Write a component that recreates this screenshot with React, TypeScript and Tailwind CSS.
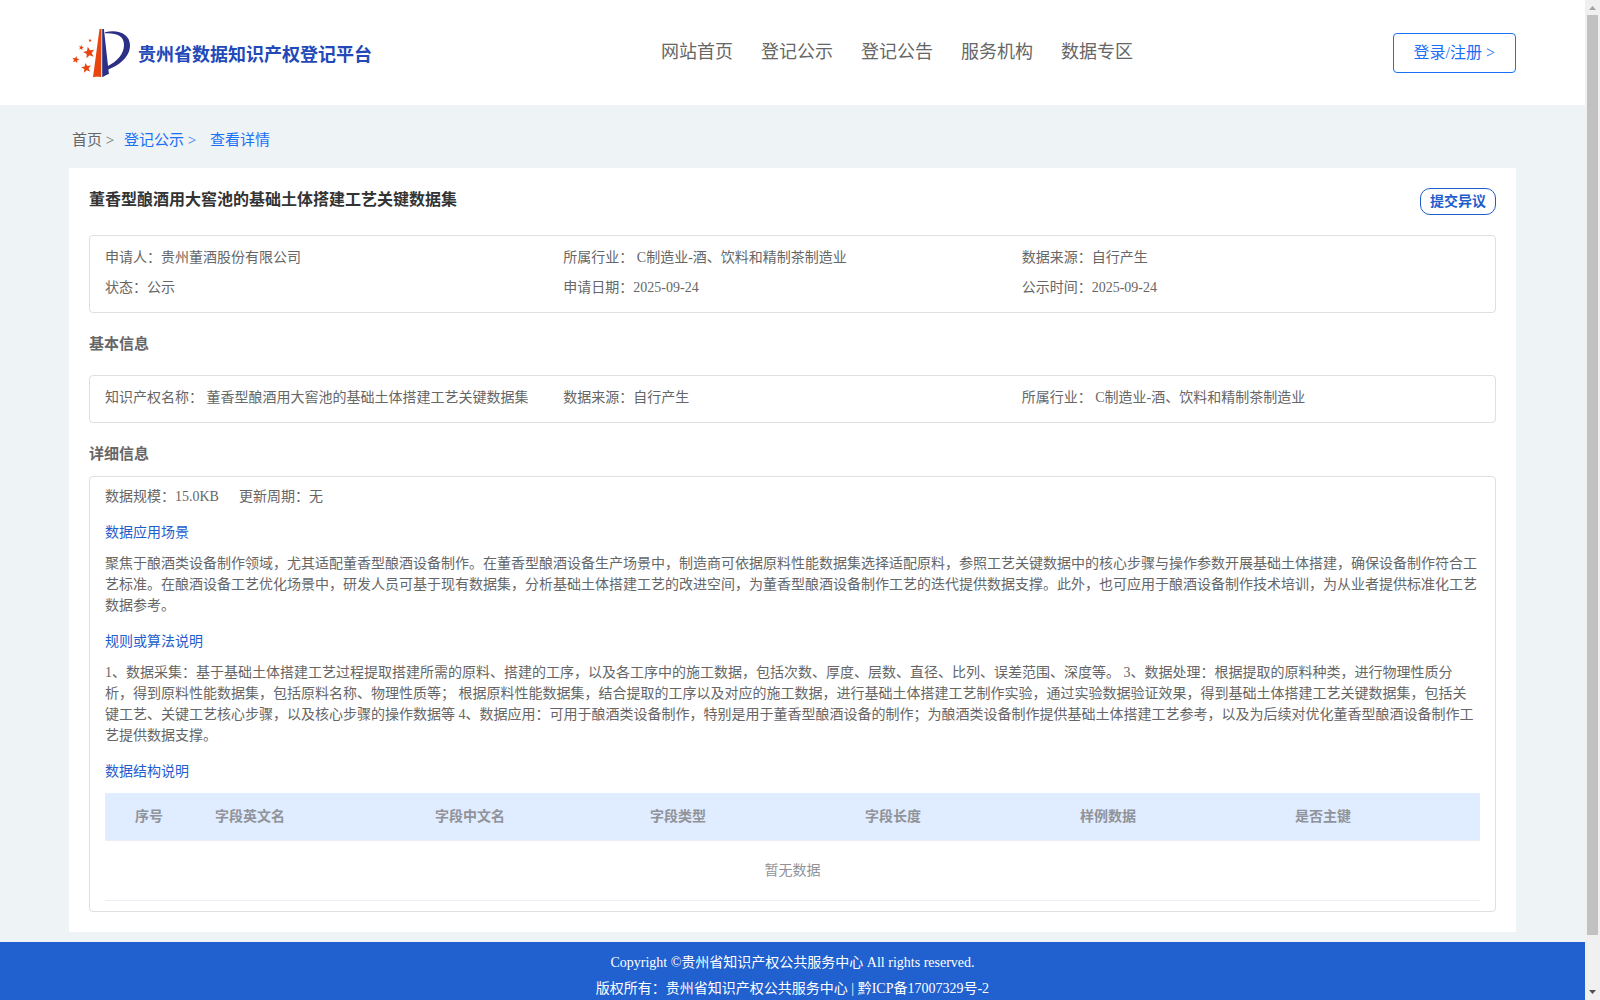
import React from "react";

const navItems = ["网站首页", "登记公示", "登记公告", "服务机构", "数据专区"];
const columns = ["序号", "字段英文名", "字段中文名", "字段类型", "字段长度", "样例数据", "是否主键"];

const summary = [
  "申请人：贵州董酒股份有限公司",
  "所属行业： C制造业-酒、饮料和精制茶制造业",
  "数据来源：自行产生",
  "状态：公示",
  "申请日期：2025-09-24",
  "公示时间：2025-09-24",
];

const basics = [
  "知识产权名称： 董香型酿酒用大窖池的基础土体搭建工艺关键数据集",
  "数据来源：自行产生",
  "所属行业： C制造业-酒、饮料和精制茶制造业",
];

const scene =
  "聚焦于酿酒类设备制作领域，尤其适配董香型酿酒设备制作。在董香型酿酒设备生产场景中，制造商可依据原料性能数据集选择适配原料，参照工艺关键数据中的核心步骤与操作参数开展基础土体搭建，确保设备制作符合工艺标准。在酿酒设备工艺优化场景中，研发人员可基于现有数据集，分析基础土体搭建工艺的改进空间，为董香型酿酒设备制作工艺的迭代提供数据支撑。此外，也可应用于酿酒设备制作技术培训，为从业者提供标准化工艺数据参考。";

const rules =
  "1、数据采集：基于基础土体搭建工艺过程提取搭建所需的原料、搭建的工序，以及各工序中的施工数据，包括次数、厚度、层数、直径、比列、误差范围、深度等。 3、数据处理：根据提取的原料种类，进行物理性质分析，得到原料性能数据集，包括原料名称、物理性质等； 根据原料性能数据集，结合提取的工序以及对应的施工数据，进行基础土体搭建工艺制作实验，通过实验数据验证效果，得到基础土体搭建工艺关键数据集，包括关键工艺、关键工艺核心步骤，以及核心步骤的操作数据等 4、数据应用：可用于酿酒类设备制作，特别是用于董香型酿酒设备的制作；为酿酒类设备制作提供基础土体搭建工艺参考，以及为后续对优化董香型酿酒设备制作工艺提供数据支撑。";

function Star({ x, y, r, turn }: { x: number; y: number; r: number; turn: number }) {
  return (
    <path
      transform={`translate(${x} ${y}) rotate(${turn}) scale(${r})`}
      d="M0-1 .26-.36 .95-.31 .42.14 .59.81 0 .44-.59.81-.42.14-.95-.31-.26-.36Z"
    />
  );
}

function Logo() {
  return (
    <svg className="h-[52px] w-[60px] shrink-0" viewBox="0 0 60 52" aria-hidden="true">
      <g fill="#e8450f">
        <path d="M27.500 2h2l-.3 48.300c-3-.6-5-.6-8.200 0Z" />
        <Star x={17} y={25.700} r={6} turn={-12} />
        <Star x={14.300} y={41} r={5.200} turn={-10} />
        <Star x={3.700} y={32.700} r={3.800} turn={12} />
        <Star x={9.300} y={20.700} r={2.700} turn={15} />
        <Star x={18} y={13.500} r={1.800} turn={10} />
      </g>
      <g fill="#2b2f86">
        <path d="M30.200 2h1.700l5 45c-2 .6-4 1.600-6.700 3.300Z" />
        <path d="M33 5.300C46 2 58 7 58 18.500 58 30 47 38.500 36 42.500l-.5-3.200C45 34.500 52 27 52 18 52 9 45 5.800 33 6.300Z" />
      </g>
    </svg>
  );
}

function Box({ className, children }: { className: string; children: React.ReactNode }) {
  return <div className={`rounded border border-[#dddfe0] px-[15px] text-sm ${className}`}>{children}</div>;
}

function Facts({ items }: { items: string[] }) {
  return (
    <Box className="pt-[7px] pb-[9px]">
      <ul className="grid grid-cols-3 leading-[30px]">
        {items.map((item) => (
          <li key={item} className="whitespace-nowrap">{item}</li>
        ))}
      </ul>
    </Box>
  );
}

function Scrollbar() {
  return (
    <div className="flex w-[15px] shrink-0 flex-col items-center bg-[#f0f0f0]" aria-hidden="true">
      <svg className="h-[15px] w-[15px]" viewBox="0 0 15 15">
        <path d="M4 10h7L7.500 6Z" fill="#a3a3a3" />
      </svg>
      <div className="w-[11px] grow bg-[#c1c1c1]" />
      <div className="h-[50px]" />
      <svg className="h-[15px] w-[15px]" viewBox="0 0 15 15">
        <path d="M4 5h7L7.500 9Z" fill="#505050" />
      </svg>
    </div>
  );
}

export default function App() {
  return (
    <div className="flex h-screen bg-[#eef3f6] font-['Liberation_Serif','Noto_Sans_CJK_SC',serif] text-[#666]">
      <div className="flex min-w-0 grow flex-col overflow-y-auto [scrollbar-width:none]">
        <header className="flex h-[105px] shrink-0 items-center justify-between bg-white px-[69px]">
          <div className="flex flex-1 items-center gap-1.5 pl-[3px]">
            <Logo />
            <h1 className="pt-1 text-lg font-bold whitespace-nowrap text-[#2348b8]">贵州省数据知识产权登记平台</h1>
          </div>
          <nav className="flex gap-7 pb-0.5 pl-[206px] text-lg whitespace-nowrap">
            {navItems.map((item) => (
              <a key={item} href="#">{item}</a>
            ))}
          </nav>
          <div className="flex flex-1 justify-end">
            <button className="h-10 rounded border border-[#1a6ff5] px-5 text-base whitespace-nowrap text-[#1a6ff5]">登录/注册 &gt;</button>
          </div>
        </header>

        <div className="px-[69px] pb-2.5">
          <nav className="flex h-[63px] items-center px-[3px] pt-1.5 text-[15px] leading-[22px] text-[#1a6ff5]">
            <a href="#" className="w-[52px] text-[#666]">首页 &gt;</a>
            <a href="#" className="w-[86px]">登记公示 &gt;</a>
            <a href="#">查看详情</a>
          </nav>

          <main className="bg-white p-5">
            <div className="flex h-[47px] items-start justify-between">
              <h2 className="text-base leading-6 font-bold text-[#333]">董香型酿酒用大窖池的基础土体搭建工艺关键数据集</h2>
              <button className="h-[27px] rounded-[10px] border border-[#1f5dcd] px-[9px] text-sm font-bold text-[#1f5dcd]">提交异议</button>
            </div>
            <Facts items={summary} />
            <h3 className="h-[62px] text-[15px] leading-[62px] font-bold">基本信息</h3>
            <Facts items={basics} />
            <h3 className="h-[53px] text-[15px] leading-[62px] font-bold">详细信息</h3>

            <Box className="pt-[9px] pb-2.5 leading-[21px]">
              <div className="flex gap-5">
                <span>数据规模：15.0KB</span>
                <span>更新周期：无</span>
              </div>
              <h4 className="mt-[15px] mb-2.5 text-[#1f5dcd]">数据应用场景</h4>
              <p>{scene}</p>
              <h4 className="mt-[15px] mb-2.5 text-[#1f5dcd]">规则或算法说明</h4>
              <p>{rules}</p>
              <h4 className="mt-[15px] mb-[11px] text-[#1f5dcd]">数据结构说明</h4>
              <table className="w-full table-fixed border-collapse text-[#909399]">
                <thead>
                  <tr className="h-[47px] border-b border-[#ebeef5] bg-[#e0ecff]">
                    {columns.map((name, i) => (
                      <th
                        key={name}
                        className={`pr-0 pl-[30px] text-left font-bold ${i === 0 ? "w-[80px]" : i === 1 ? "w-[220px]" : ""}`}
                      >
                        {name}
                      </th>
                    ))}
                  </tr>
                </thead>
                <tbody>
                  <tr className="h-[60px] border-b border-[#ebeef5]">
                    <td colSpan={7} className="text-center">暂无数据</td>
                  </tr>
                </tbody>
              </table>
            </Box>
          </main>
        </div>

        <footer className="shrink-0 grow bg-[#2160cf] pt-2 pb-12 text-center text-sm leading-[26px] text-white">
          <p>Copyright ©贵州省知识产权公共服务中心 All rights reserved.</p>
          <p>
            版权所有：贵州省知识产权公共服务中心 | <a href="#">黔ICP备17007329号-2</a>
          </p>
        </footer>
      </div>
      <Scrollbar />
    </div>
  );
}
